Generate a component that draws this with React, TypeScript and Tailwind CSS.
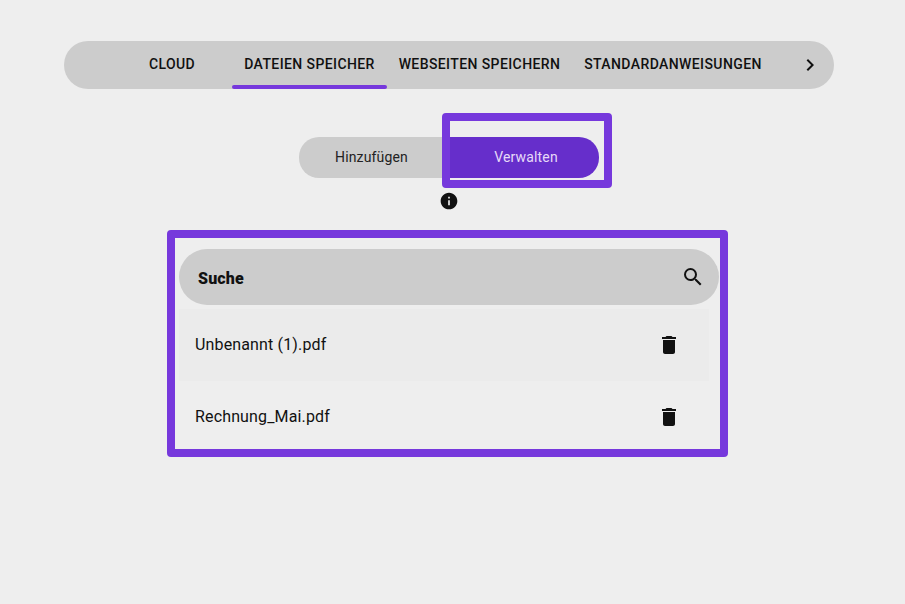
import { MdChevronRight, MdDelete, MdInfo, MdSearch } from "react-icons/md";

const files = ["Unbenannt (1).pdf", "Rechnung_Mai.pdf"];

function Tab({ label, active, className }: { label: string; active?: boolean; className: string }) {
  return (
    <div className={`relative flex h-12 items-center justify-center pb-0.5 text-sm font-medium uppercase tracking-[0.4px] text-[#111111] ${className}`}>
      {label}
      {active && <span className="absolute bottom-0 left-0 h-1 w-full rounded-sm bg-[#7638dc]" />}
    </div>
  );
}

export default function App() {
  return (
    <div className="min-h-[604px] w-[905px] overflow-hidden bg-[#eeeeee] font-['Roboto',sans-serif]">
      <div className="flex w-[898px] flex-col items-center pt-[41px]">
        <div className="flex h-12 w-[770px] items-center rounded-3xl bg-[#cccccc] pl-12">
          <Tab label="Cloud" className="w-[120px]" />
          <Tab label="Dateien speicher" active className="w-[155px]" />
          <Tab label="Webseiten speichern" className="w-[185px]" />
          <Tab label="Standardanweisungen" className="w-[202px]" />
          <div className="ml-[16px] flex w-10 justify-center text-[#111111]">
            <MdChevronRight size={24} />
          </div>
        </div>

        <div className="relative mt-12 flex h-[41px] w-[300px] text-sm tracking-[0.15px]">
          <div className="flex w-[150px] items-center justify-center rounded-l-[20px] bg-[#cccccc] pb-0.5 pr-[5px] text-[#222222]">
            Hinzufügen
          </div>
          <div className="flex w-[150px] items-center justify-center rounded-r-[20px] bg-[#662ecb] pb-0.5 pl-[4px] text-[#e6daf8]">
            Verwalten
          </div>
          <div className="absolute left-[143px] top-[-24px] h-[75px] w-[170px] rounded-sm border-8 border-[#7638dc]" />
        </div>

        <MdInfo size={20} className="mt-[13px] text-[#111111]" />

        <div className="relative mt-[38px] w-[540px]">
          <div className="flex h-14 items-center justify-between rounded-[28px] bg-[#cccccc] pl-[19px] pr-[14px]">
            <span className="pt-1 text-base font-black tracking-[0.15px] text-[#111111]">Suche</span>
            <MdSearch size={24} className="text-[#111111]" />
          </div>
          <div className="mt-1 w-[530px]">
            {files.map((name, i) => (
              <div key={name} className={`flex h-[72px] items-center justify-between pl-4 pr-[28px] ${i === 0 ? "bg-[#ebebeb]" : ""}`}>
                <span className="text-base tracking-[0.15px] text-[#111111]">{name}</span>
                <MdDelete size={24} className="text-[#111111]" />
              </div>
            ))}
          </div>
          <div className="absolute left-[-12px] top-[-19px] h-[227px] w-[561px] rounded-sm border-8 border-[#7638dc]" />
        </div>
      </div>
    </div>
  );
}
